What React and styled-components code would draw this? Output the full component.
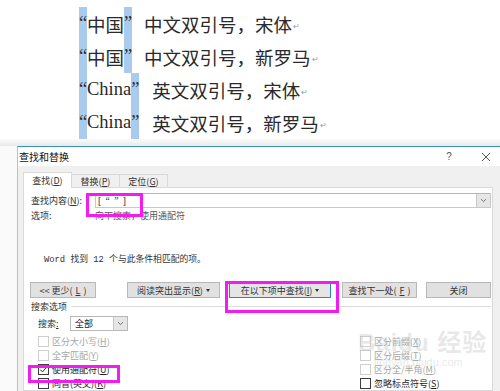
import styled, { createGlobalStyle } from 'styled-components'

const GlobalStyle = createGlobalStyle`
  html, body {
    margin: 0;
    padding: 0;
    background: #ffffff;
  }
`

const cjk = `"Noto Sans CJK SC", "Liberation Sans", sans-serif`

const Page = styled.div`
  position: relative;
  width: 500px;
  height: 391px;
  overflow: hidden;
  background: #ffffff;
  display: flex;
  flex-direction: column;
  font-family: ${cjk};
`

//Document
const Doc = styled.div`
  height: 134px;
  padding: 7px 0 0 79px;
  display: flex;
  flex-direction: column;
`

const Line = styled.div`
  height: 33px;
  display: flex;
  align-items: center;
  font-size: 18.5px;
  color: #2a2a2a;
  white-space: nowrap;
`

const Quote = styled.span`
  width: 8px;
  height: 33px;
  background: #a8cbee;
  font-family: 'Liberation Serif', serif;
  font-size: 18.5px;
  line-height: 33px;
  overflow: visible;
`

const Word = styled.span`
  font-family: 'Liberation Serif', ${cjk};
`

const Rest = styled.span`
  margin-left: ${(p) => p.gap}px;
`

const Mark = styled.span`
  font-size: 8px;
  color: #9a9a9a;
  align-self: flex-end;
  margin: 0 0 9px 1px;
`

const Shade = styled.div`
  height: 11px;
  background: linear-gradient(to bottom, #fcfcfc, #e8e8e8);
`

//Dialog
const Lower = styled.div`
  flex: 1;
  display: flex;
`

const Margin = styled.div`
  width: 17px;
  background: #fafafa;
`

const Dialog = styled.div`
  flex: 1;
  display: flex;
  flex-direction: column;
  background: #f0f0f0;
  border-top: 1px solid #3a94ba;
  border-left: 1px solid #b4c3cc;
`

const TitleBar = styled.div`
  height: 19px;
  background: #ffffff;
  display: flex;
  align-items: center;
  padding-left: 1px;
`

const Title = styled.div`
  flex: 1;
  font-size: 10px;
  color: #111;
`

const Help = styled.div`
  width: 24px;
  text-align: center;
  font-size: 10px;
  color: #555;
  font-family: 'Liberation Sans', sans-serif;
`

const Close = styled.div`
  width: 28px;
  margin-left: 11px;
  display: flex;
  justify-content: center;
  align-items: center;
`

const TabStrip = styled.div`
  height: 21px;
  display: flex;
  align-items: flex-end;
  padding-left: 5px;
`

const Tab = styled.div`
  width: ${(p) => p.w}px;
  height: ${(p) => (p.active ? 16 : 13)}px;
  box-sizing: border-box;
  display: flex;
  align-items: center;
  justify-content: center;
  font-size: 9px;
  color: #333;
  background: ${(p) => (p.active ? '#ffffff' : '#f0f0f0')};
  border: 1px solid #d9d9d9;
  border-bottom: none;
  border-left: ${(p) => (p.first ? '1px solid #d9d9d9' : 'none')};
  margin-bottom: ${(p) => (p.active ? -1 : 0)}px;
  position: relative;
  z-index: ${(p) => (p.active ? 1 : 0)};
`

const Key = styled.span`
  text-decoration: underline;
`

const Body = styled.div`
  flex: 1;
  display: flex;
  padding: 0 7px 0 5px;
`

const Panel = styled.div`
  flex: 1;
  background: #ffffff;
  border: 1px solid #d9d9d9;
  display: flex;
  flex-direction: column;
  font-size: 9px;
  color: #333;
`

const FieldRow = styled.div`
  height: 15px;
  margin-top: 5px;
  padding: 0 1px 0 7px;
  display: flex;
  align-items: center;
`

const Label = styled.div`
  width: ${(p) => p.w}px;
  flex-shrink: 0;
  white-space: nowrap;
`

const Input = styled.div`
  flex: 1;
  height: 15px;
  box-sizing: border-box;
  border: 1px solid #c8c8c8;
  border-top-color: #b5b5b5;
  display: flex;
  align-items: center;
  padding-left: 2px;
  color: #222;
  font-family: 'Liberation Serif', ${cjk};
  font-size: 9.5px;
`

const InputText = styled.div`
  flex: 1;
  letter-spacing: 1px;
`

const DropButton = styled.div`
  width: 13px;
  height: 13px;
  background: #e6e6e6;
  border-left: 1px solid #c8c8c8;
  display: flex;
  align-items: center;
  justify-content: center;
`

const TextRow = styled.div`
  height: 14px;
  margin-top: ${(p) => p.top || 0}px;
  padding-left: ${(p) => p.left}px;
  display: flex;
  align-items: center;
  white-space: nowrap;
`

const Muted = styled.span`
  color: #555;
`

const Message = styled.span`
  font-family: 'Liberation Mono', ${cjk};
  font-size: 8.8px;
  color: #333;
`

const ButtonRow = styled.div`
  height: 16px;
  margin-top: 17px;
  padding-left: 6px;
  display: flex;
`

const Button = styled.div`
  width: ${(p) => p.w}px;
  margin-left: ${(p) => p.gap || 0}px;
  box-sizing: border-box;
  display: flex;
  align-items: center;
  justify-content: center;
  gap: 3px;
  background: ${(p) => (p.focused ? '#e5e5e5' : '#e1e1e1')};
  border: 1px solid ${(p) => (p.focused ? '#2a82d4' : '#b8b8b8')};
  font-size: 9px;
  color: #333;
  white-space: nowrap;
`

const Caret = styled.span`
  width: 0;
  height: 0;
  border-left: 2.5px solid transparent;
  border-right: 2.5px solid transparent;
  border-top: 3px solid #333;
`

const Section = styled.div`
  height: 14px;
  margin-top: 1px;
  padding: 0 1px 0 7px;
  display: flex;
  align-items: center;
  gap: 4px;
  &::after {
    content: '';
    flex: 1;
    height: 1px;
    background: #dedede;
  }
`

const SearchRow = styled.div`
  height: 15px;
  margin-top: 3px;
  padding-left: 14px;
  display: flex;
  align-items: center;
`

const Select = styled.div`
  width: 58px;
  height: 15px;
  box-sizing: border-box;
  border: 1px solid #b8b8b8;
  display: flex;
  align-items: center;
  padding-left: 4px;
  color: #222;
`

const SelectText = styled.div`
  flex: 1;
`

const Options = styled.div`
  margin-top: 3px;
  padding-left: 14px;
  display: grid;
  grid-template-columns: 322px 1fr;
  grid-auto-rows: 14px;
`

const Option = styled.div`
  display: flex;
  align-items: center;
  gap: 3px;
  white-space: nowrap;
  color: ${(p) => (p.disabled ? '#a6a6a6' : '#222')};
`

const Box = styled.div`
  width: 11px;
  height: 11px;
  box-sizing: border-box;
  border: 1px solid ${(p) => (p.disabled ? '#cfcfcf' : '#3c3c3c')};
  background: #fff;
  display: flex;
  align-items: center;
  justify-content: center;
`

//Overlays
const Highlight = styled.div`
  position: absolute;
  left: ${(p) => p.x}px;
  top: ${(p) => p.y}px;
  width: ${(p) => p.w}px;
  height: ${(p) => p.h}px;
  box-sizing: border-box;
  border: 3px solid #f21cf0;
  pointer-events: none;
`

const Watermark = styled.div`
  position: absolute;
  left: 358px;
  top: 330px;
  display: flex;
  flex-direction: column;
  align-items: flex-start;
  color: rgba(190, 190, 190, 0.35);
  font-family: 'Liberation Sans', ${cjk};
  pointer-events: none;
`

const WaterBig = styled.div`
  font-size: 24px;
  font-weight: 700;
  letter-spacing: 1px;
  line-height: 26px;
`

const WaterSmall = styled.div`
  font-size: 11px;
  margin-left: 16px;
`

const Chevron = () => (
  <svg width="7" height="5" viewBox="0 0 7 5">
    <path d="M1 1.2 L3.5 3.6 L6 1.2" fill="none" stroke="#666" strokeWidth="0.9" />
  </svg>
)

const Check = () => (
  <svg width="9" height="9" viewBox="0 0 9 9">
    <path d="M1.3 4.6 L3.5 6.9 L7.8 1.8" fill="none" stroke="#222" strokeWidth="1" />
  </svg>
)

const lines = [
  { word: '中国', gap: 12, rest: '中文双引号，宋体' },
  { word: '中国', gap: 12, rest: '中文双引号，新罗马' },
  { word: 'China', gap: 13, rest: '英文双引号，宋体' },
  { word: 'China', gap: 13, rest: '英文双引号，新罗马' },
]

const options = [
  { label: '区分大小写', key: 'H', disabled: true },
  { label: '区分前缀', key: 'X', disabled: true },
  { label: '全字匹配', key: 'Y', disabled: true },
  { label: '区分后缀', key: 'T', disabled: true },
  { label: '使用通配符', key: 'U', checked: true },
  { label: '区分全/半角', key: 'M', disabled: true },
  { label: '同音(英文)', key: 'K' },
  { label: '忽略标点符号', key: 'S' },
]

export default function App() {
  return (
    <Page>
      <GlobalStyle />
      <Doc>
        {lines.map((l, i) => (
          <Line key={i}>
            <Quote>“</Quote>
            <Word>{l.word}</Word>
            <Quote>”</Quote>
            <Rest gap={l.gap}>{l.rest}</Rest>
            <Mark>↵</Mark>
          </Line>
        ))}
      </Doc>
      <Shade />
      <Lower>
        <Margin />
        <Dialog>
          <TitleBar>
            <Title>查找和替换</Title>
            <Help>?</Help>
            <Close>
              <svg width="10" height="10" viewBox="0 0 10 10">
                <path d="M1 1 L9 9 M9 1 L1 9" stroke="#444" strokeWidth="0.9" />
              </svg>
            </Close>
          </TitleBar>
          <TabStrip>
            <Tab w={49} active first>
              查找(<Key>D</Key>)
            </Tab>
            <Tab w={48}>
              替换(<Key>P</Key>)
            </Tab>
            <Tab w={48}>
              定位(<Key>G</Key>)
            </Tab>
          </TabStrip>
          <Body>
            <Panel>
              <FieldRow>
                <Label w={64}>
                  查找内容(<Key>N</Key>):
                </Label>
                <Input>
                  <InputText>[ “ ” ]</InputText>
                  <DropButton>
                    <Chevron />
                  </DropButton>
                </Input>
              </FieldRow>
              <TextRow left={7}>
                <Label w={64}>选项:</Label>
                <Muted>向下搜索，使用通配符</Muted>
              </TextRow>
              <TextRow left={20} top={29}>
                <Message>Word 找到 12 个与此条件相匹配的项。</Message>
              </TextRow>
              <ButtonRow>
                <Button w={66}>
                  &lt;&lt; 更少(<Key>L</Key>)
                </Button>
                <Button w={93} gap={31}>
                  <span>
                    阅读突出显示(<Key>R</Key>)
                  </span>
                  <Caret />
                </Button>
                <Button w={102} gap={9} focused>
                  <span>
                    在以下项中查找(<Key>I</Key>)
                  </span>
                  <Caret />
                </Button>
                <Button w={75} gap={11}>
                  查找下一处(<Key>F</Key>)
                </Button>
                <Button w={65} gap={9}>
                  关闭
                </Button>
              </ButtonRow>
              <Section>搜索选项</Section>
              <SearchRow>
                <Label w={32}>
                  搜索<Key>:</Key>
                </Label>
                <Select>
                  <SelectText>全部</SelectText>
                  <DropButton>
                    <Chevron />
                  </DropButton>
                </Select>
              </SearchRow>
              <Options>
                {options.map((o) => (
                  <Option key={o.key} disabled={o.disabled}>
                    <Box disabled={o.disabled}>{o.checked && <Check />}</Box>
                    <span>
                      {o.label}(<Key>{o.key}</Key>)
                    </span>
                  </Option>
                ))}
              </Options>
            </Panel>
          </Body>
        </Dialog>
      </Lower>
      <Highlight x={86} y={193} w={57} h={24} />
      <Highlight x={225} y={281} w={114} h={32} />
      <Highlight x={28} y={365} w={92} h={18} />
      <Watermark>
        <WaterBig>Baidu 经验</WaterBig>
        <WaterSmall>jingyan.baidu.com</WaterSmall>
      </Watermark>
    </Page>
  )
}
